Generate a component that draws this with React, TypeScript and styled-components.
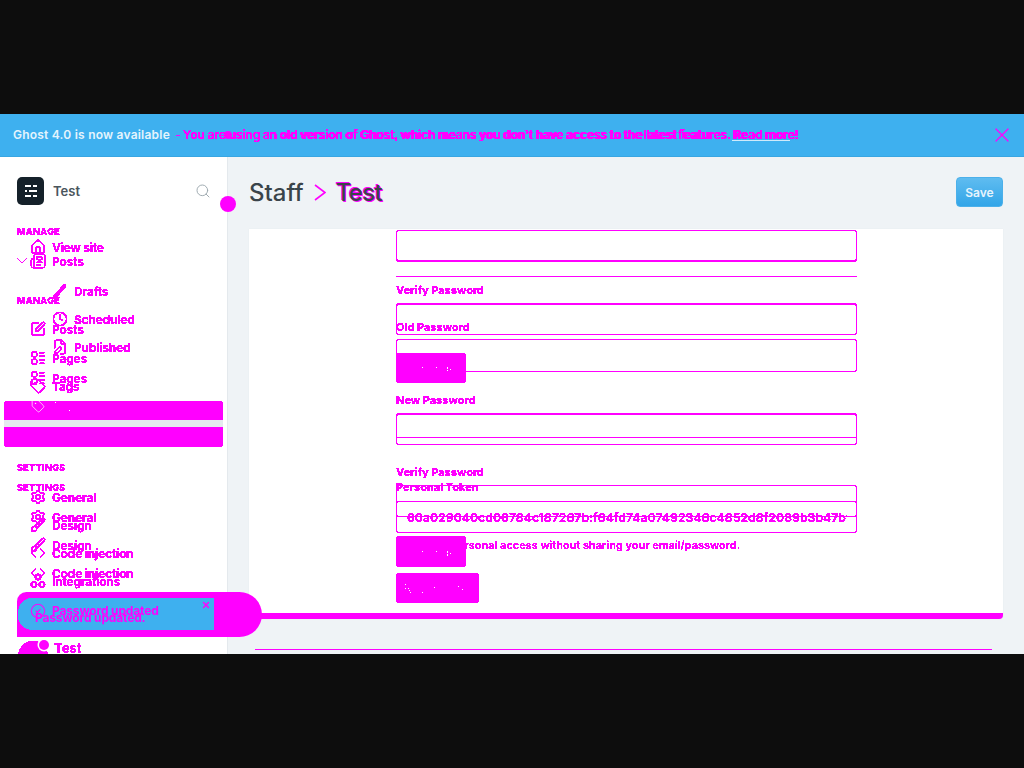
import React from "react";
import styled, { createGlobalStyle } from "styled-components";
import {
  Search, X, ChevronDown, ChevronUp, House, Newspaper, Brush, Clock, FilePen,
  SquarePen, LayoutList, Tag, Settings, Code, CircleCheck, LucideIcon,
} from "lucide-react";

const MAGENTA = "#ff00ff";

const GlobalStyle = createGlobalStyle`
  html, body {
    margin: 0;
    background: #0d0d0d;
    font-family: Inter, "Liberation Sans", sans-serif;
  }
`;

const FilterDefs = styled.svg`
  position: absolute;
  width: 0;
  height: 0;
`;

const Page = styled.div`
  height: 768px;
  padding-top: 114px;
  box-sizing: border-box;
  background: #0d0d0d;
`;

const Frame = styled.div`
  position: relative;
  height: 540px;
  display: flex;
  flex-direction: column;
  overflow: hidden;
  background: #eff3f6;
`;

const Marker = styled.span<{ $y: number; $r: number }>`
  position: absolute;
  z-index: 3;
  left: ${p => 228 - p.$r}px;
  top: ${p => p.$y - p.$r}px;
  width: ${p => p.$r * 2}px;
  height: ${p => p.$r * 2}px;
  border-radius: 50%;
  background: ${MAGENTA};
`;

/* banner */
const Banner = styled.div`
  flex: 0 0 43px;
  display: flex;
  align-items: center;
  padding: 0 10px 1px 13px;
  background: #3eb0ef;
  border-bottom: 1px solid #39a6e2;
  box-sizing: border-box;
  font-size: 12px;
`;

const Headline = styled.strong`
  color: #e4f4fd;
  font-weight: 600;
  letter-spacing: 0.22px;
  white-space: nowrap;
`;

const Announce = styled.div`
  position: relative;
  flex: 1;
  height: 16px;
  margin-left: 5px;
  filter: url(#crisp);
  color: ${MAGENTA};
  font-weight: 500;
  line-height: 16px;
  white-space: nowrap;
`;

const AnnounceLine = styled.span<{ $x: number; $spacing: number; $words: number }>`
  position: absolute;
  left: ${p => p.$x}px;
  top: 0;
  letter-spacing: ${p => p.$spacing}px;
  word-spacing: ${p => p.$words}px;
`;

const ReadMoreLine = styled.i`
  position: absolute;
  left: 557px;
  top: 13px;
  width: 58px;
  height: 1px;
  background: #cfeafa;
`;

const Body = styled.div`
  flex: 1;
  display: flex;
  min-height: 0;
`;

/* sidebar */
const Sidebar = styled.aside`
  position: relative;
  z-index: 2;
  flex: 0 0 228px;
  background: #fff;
  border-right: 1px solid #e4e9ed;
  box-sizing: border-box;
`;

const Brand = styled.div`
  height: 63px;
  box-sizing: border-box;
  display: flex;
  align-items: flex-start;
  padding: 20px 16px 0 17px;
  gap: 9px;
`;

const BrandName = styled.span`
  flex: 1;
  font-size: 13px;
  font-weight: 600;
  line-height: 28px;
  color: #4a555c;
`;

const SearchWrap = styled.span`
  display: flex;
  margin: 6px 0 0;
  color: #9aa6ac;
`;

const NavStack = styled.div`
  position: relative;
`;

const NavLayer = styled.nav<{ $over?: boolean }>`
  display: flow-root;
  filter: url(#crisp);
  ${p => p.$over && "position: absolute; inset: 0;"}
`;

const NavHead = styled.div<{ $gap: number }>`
  height: 14px;
  margin-top: ${p => p.$gap}px;
  padding-left: 17px;
  font-size: 9px;
  font-weight: 800;
  line-height: 14px;
  letter-spacing: 0.35px;
  color: ${MAGENTA};
`;

const NavRow = styled.a<{ $gap: number; $level: number }>`
  display: flex;
  align-items: center;
  gap: 6px;
  height: 14px;
  margin-top: ${p => p.$gap}px;
  padding-left: ${p => (p.$level ? 52 : 30)}px;
  font-size: 12px;
  font-weight: 700;
  letter-spacing: -0.22px;
  color: ${MAGENTA};
  white-space: nowrap;
`;

const Caret = styled.span`
  display: flex;
  width: 16px;
  margin: 0 -6px 0 -16px;
`;

const ActiveBlock = styled.div<{ $gap: number }>`
  display: flex;
  flex-direction: column;
  margin: ${p => p.$gap}px 4px 0 4px;
`;

const ActivePart = styled.div<{ $h: number; $top?: boolean }>`
  display: flex;
  align-items: flex-start;
  height: ${p => p.$h}px;
  background: ${MAGENTA};
  border-radius: ${p => (p.$top ? "3px 3px 0 0" : "0 0 3px 3px")};
  padding: 0 0 0 26px;
`;

const ActiveGap = styled.div`
  height: 7px;
  background: #e5eaef;
`;

const Speck = styled.span`
  filter: url(#speck);
  color: #fff;
  font-size: 12px;
  font-weight: 300;
  white-space: nowrap;
`;

const ActiveLabel = styled.span`
  display: flex;
  align-items: center;
  gap: 6px;
  height: 14px;
  margin-top: -2px;
  color: #fff;
`;

const UserRow = styled.div<{ $gap: number }>`
  position: relative;
  display: flex;
  gap: 6px;
  margin-top: ${p => p.$gap}px;
  padding: 0 17px 0 18px;
  color: ${MAGENTA};
  font-size: 13px;
  font-weight: 700;
  line-height: 14px;
`;

const Avatar = styled.span`
  position: relative;
  width: 30px;
  height: 30px;
  border-radius: 50%;
  background: ${MAGENTA};
`;

const AvatarBadge = styled.span`
  position: absolute;
  right: -1px;
  top: -1px;
  width: 10px;
  height: 10px;
  border-radius: 50%;
  background: ${MAGENTA};
  box-shadow: 0 0 0 1.5px #fff;
`;

const UserCaret = styled.span`
  display: flex;
  margin: 9px 0 0 auto;
`;

/* toast */
const Toast = styled.div`
  position: absolute;
  z-index: 4;
  left: 17px;
  top: 435px;
  width: 245px;
  height: 45px;
  box-sizing: border-box;
  padding: 6px 0 7px 1px;
  background: ${MAGENTA};
  border-radius: 10px 24px 24px 0;
`;

const ToastInner = styled.div`
  position: relative;
  display: flex;
  gap: 6px;
  width: 196px;
  height: 100%;
  box-sizing: border-box;
  padding: 5px 0 0 12px;
  background: #3eb0ef;
  border-radius: 15px 2px 2px 15px;
  color: ${MAGENTA};
  font-size: 12px;
  font-weight: 700;
  letter-spacing: -0.15px;
  filter: url(#crisp);
`;

const ToastText = styled.span`
  margin-top: 1px;
  line-height: 14px;
  white-space: nowrap;
`;

const ToastEcho = styled(ToastText)`
  position: absolute;
  left: 17px;
  top: 12px;
`;

const ToastClose = styled.span`
  position: absolute;
  right: 3px;
  top: 2px;
  display: flex;
`;

/* main */
const Main = styled.main`
  flex: 1;
  min-width: 0;
  padding: 0 21px;
  background: #eff3f6;
`;

const MainHeader = styled.header`
  height: 72px;
  display: flex;
  align-items: flex-start;
  justify-content: space-between;
  padding-top: 20px;
  box-sizing: border-box;
`;

const Title = styled.h1`
  display: flex;
  align-items: center;
  gap: 10px;
  margin: 0;
  height: 30px;
  font-size: 24px;
  font-weight: 500;
  color: #3a444a;
`;

const Crumb = styled.svg`
  width: 12px;
  height: 17px;
  fill: none;
  stroke: ${MAGENTA};
  stroke-width: 1.6;
`;

const Doubled = styled.span`
  letter-spacing: -0.7px;
  text-shadow: -1px -1px 0 ${MAGENTA}, 1px 1px 0 ${MAGENTA};
`;

const SaveButton = styled.button`
  width: 47px;
  height: 30px;
  border: 1px solid #4bb0ea;
  border-radius: 4px;
  background: linear-gradient(#5fbcf0, #32a5e8);
  color: #e6f4fd;
  font: 600 12px Inter, sans-serif;
`;

const Card = styled.section`
  position: relative;
  height: 390px;
  box-sizing: border-box;
  background: #fff;
  border-bottom: 6px solid ${MAGENTA};
  border-radius: 0 0 4px 4px;
  box-shadow: 0 0 1px #d7dee3;
`;

const Form = styled.div`
  position: relative;
  display: flow-root;
  width: 461px;
  margin-left: 147px;
`;

const FormLayer = styled.div<{ $over?: boolean }>`
  display: flow-root;
  filter: url(#crisp);
  ${p => p.$over && "position: absolute; inset: 0;"}
`;

const Box = styled.div<{ $gap: number; $h: number; $tw?: number; $bw?: number }>`
  height: ${p => p.$h}px;
  box-sizing: border-box;
  margin-top: ${p => p.$gap}px;
  border: 1px solid ${MAGENTA};
  border-top-width: ${p => p.$tw ?? 1}px;
  border-bottom-width: ${p => p.$bw ?? 1}px;
  border-radius: 3px;
`;

const Rule = styled.hr<{ $gap: number }>`
  height: 1px;
  margin: ${p => p.$gap}px 0 0;
  border: 0;
  background: ${MAGENTA};
`;

const Label = styled.label<{ $gap: number }>`
  display: block;
  height: 14px;
  margin-top: ${p => p.$gap}px;
  font-size: 11px;
  font-weight: 700;
  line-height: 14px;
  color: ${MAGENTA};
`;

const TokenBox = styled(Box)`
  display: flex;
  align-items: center;
  padding: 0 9px 0 10px;
  font-size: 12.3px;
  font-weight: 600;
  color: ${MAGENTA};
`;

const TokenText = styled.span`
  flex: 1;
  overflow: hidden;
  white-space: nowrap;
`;

const Help = styled.p<{ $gap: number }>`
  height: 14px;
  margin: ${p => p.$gap}px 0 0;
  font-size: 11px;
  font-weight: 600;
  letter-spacing: -0.03px;
  line-height: 14px;
  color: ${MAGENTA};
`;

const FormButton = styled.button<{ $gap: number; $w: number; $h: number; $pad: number }>`
  display: block;
  width: ${p => p.$w}px;
  height: ${p => p.$h}px;
  margin-top: ${p => p.$gap}px;
  padding: 0 ${p => p.$pad}px 0 0;
  border: 0;
  border-radius: 3px;
  background: ${MAGENTA};
  text-align: right;
  font-family: Inter, sans-serif;
`;

const Divider = styled.div`
  height: 1px;
  margin: 30px 11px 0 6px;
  background: ${MAGENTA};
`;

const IconSlot = styled.span`
  display: flex;
  flex: 0 0 16px;
  justify-content: center;
`;

function IntegrationsIcon() {
  return (
    <svg width="16" height="16" viewBox="0 0 16 16" fill="none" stroke="currentColor" strokeWidth="1.6">
      <circle cx="8" cy="4" r="2.6" />
      <circle cx="4" cy="11.5" r="2.6" />
      <circle cx="12" cy="11.5" r="2.6" />
    </svg>
  );
}

function DraftIcon() {
  return (
    <svg width="16" height="16" viewBox="0 0 16 16" fill="none" stroke="currentColor" strokeWidth="3.6" strokeLinecap="round">
      <path d="M3 13.5 12.5 3" />
    </svg>
  );
}

type NavItem = {
  label: string;
  y: number;
  head?: boolean;
  level?: number;
  caret?: boolean;
  Icon?: LucideIcon | typeof IntegrationsIcon;
};

const expanded: NavItem[] = [
  { label: "MANAGE", y: 232, head: true },
  { label: "View site", y: 247, Icon: House },
  { label: "Posts", y: 261, Icon: Newspaper, caret: true },
  { label: "Drafts", y: 291, Icon: DraftIcon, level: 1 },
  { label: "Scheduled", y: 319, Icon: Clock, level: 1 },
  { label: "Published", y: 347, Icon: FilePen, level: 1 },
  { label: "Pages", y: 378, Icon: LayoutList },
  { label: "SETTINGS", y: 488, head: true },
  { label: "General", y: 517, Icon: Settings },
  { label: "Design", y: 545, Icon: Brush },
  { label: "Code injection", y: 573, Icon: Code },
  { label: "Integrations", y: 601, Icon: IntegrationsIcon },
];

const collapsedTop: NavItem[] = [
  { label: "MANAGE", y: 301, head: true },
  { label: "Posts", y: 329, Icon: SquarePen },
  { label: "Pages", y: 358, Icon: LayoutList },
  { label: "Tags", y: 386, Icon: Tag },
];

const collapsedBottom: NavItem[] = [
  { label: "SETTINGS", y: 468, head: true },
  { label: "General", y: 497, Icon: Settings },
  { label: "Design", y: 525, Icon: Brush },
  { label: "Code injection", y: 553, Icon: Code },
  { label: "Integrations", y: 581, Icon: IntegrationsIcon },
];

// rows are 14px tall, the gap is what is left between two row centres
function renderRows(items: NavItem[], startY: number) {
  let bottom = startY;
  return items.map(item => {
    const gap = item.y - 7 - bottom;
    bottom = item.y + 7;
    if (item.head) {
      return <NavHead key={item.label} $gap={gap}>{item.label}</NavHead>;
    }
    const Icon = item.Icon;
    return (
      <NavRow key={item.label} $gap={gap} $level={item.level ?? 0}>
        {item.caret && (
          <Caret><ChevronDown size={16} strokeWidth={1.4} /></Caret>
        )}
        <IconSlot>{Icon && <Icon size={16} strokeWidth={2} />}</IconSlot>
        {item.label}
      </NavRow>
    );
  });
}

const BANNER_TEXT = "You are using an old version of Ghost, which means you don't have access to the latest features. Read more!";

export default function App() {
  return (
    <Page>
      <GlobalStyle />
      <FilterDefs aria-hidden="true">
        <filter id="crisp" colorInterpolationFilters="sRGB">
          <feComponentTransfer><feFuncA type="discrete" tableValues="0 1 1 1" /></feComponentTransfer>
        </filter>
        <filter id="speck" colorInterpolationFilters="sRGB">
          <feComponentTransfer><feFuncA type="discrete" tableValues="0 0 0 0 0 0 0 1" /></feComponentTransfer>
        </filter>
      </FilterDefs>
      <Frame>
        <Marker $y={21} $r={4} />
        <Marker $y={90} $r={8} />
        <Banner>
          <Headline>Ghost 4.0 is now available</Headline>
          <Announce>
            <AnnounceLine $x={0} $spacing={0} $words={0}>-</AnnounceLine>
            <AnnounceLine $x={8} $spacing={-0.05} $words={0}>{BANNER_TEXT}</AnnounceLine>
            <AnnounceLine $x={8} $spacing={0.16} $words={-1.2}>{BANNER_TEXT}</AnnounceLine>
            <ReadMoreLine />
          </Announce>
          <X size={24} color={MAGENTA} strokeWidth={1.2} />
        </Banner>
        <Body>
          <Sidebar>
            <Brand>
              <svg width="27" height="28" viewBox="0 0 27 28">
                <rect width="27" height="28" rx="5" fill="#15212a" />
                <g stroke="#fff" strokeWidth="2">
                  <path d="M8 9h6M16 9h4M8 14h2M12 14h8M8 19h6M16 19h4" />
                </g>
              </svg>
              <BrandName>Test</BrandName>
              <SearchWrap><Search size={16} strokeWidth={1.4} /></SearchWrap>
            </Brand>
            <NavStack>
              <NavLayer>
                {renderRows(collapsedTop, 220)}
                <ActiveBlock $gap={8}>
                  <ActivePart $h={19} $top>
                    <ActiveLabel>
                      <IconSlot><Tag size={14} strokeWidth={1.2} /></IconSlot>
                      <Speck>Tags</Speck>
                    </ActiveLabel>
                  </ActivePart>
                  <ActiveGap />
                  <ActivePart $h={20} />
                </ActiveBlock>
                {renderRows(collapsedBottom, 447)}
              </NavLayer>
              <NavLayer $over>
                {renderRows(expanded, 220)}
                <UserRow $gap={33}>
                  <Avatar><AvatarBadge /></Avatar>
                  Test
                  <UserCaret><ChevronUp size={12} strokeWidth={1.6} /></UserCaret>
                </UserRow>
              </NavLayer>
            </NavStack>
            <Toast>
              <ToastInner>
                <CircleCheck size={16} strokeWidth={1.6} />
                <ToastText>Password updated</ToastText>
                <ToastEcho>Password updated.</ToastEcho>
                <ToastClose><X size={10} strokeWidth={3.5} /></ToastClose>
              </ToastInner>
            </Toast>
          </Sidebar>
          <Main>
            <MainHeader>
              <Title>
                Staff
                <Crumb viewBox="0 0 12 17"><path d="M1 1l10 7.5L1 16" /></Crumb>
                <Doubled>Test</Doubled>
              </Title>
              <SaveButton>Save</SaveButton>
            </MainHeader>
            <Card>
              <Form>
                <FormLayer>
                  <Rule $gap={208} />
                  <Label $gap={42}>Personal Token</Label>
                  <TokenBox $gap={7} $h={32}>
                    <TokenText>60a029040cd06784c187267b:f64fd74a07492346c4852d8f2089b3b47bf0a1c2</TokenText>
                  </TokenBox>
                  <Help $gap={5}>Give apps personal access without sharing your email/password.</Help>
                  <FormButton $gap={21} $w={83} $h={30} $pad={11}><Speck>Regenerate</Speck></FormButton>
                </FormLayer>
                <FormLayer $over>
                  <Box $gap={1} $h={32} $bw={2} />
                  <Rule $gap={14} />
                  <Label $gap={6}>Verify Password</Label>
                  <Box $gap={6} $h={32} $tw={2} />
                  <FormButton $gap={18} $w={70} $h={30} $pad={10}><Speck>Change</Speck></FormButton>
                </FormLayer>
                <FormLayer $over>
                  <Label $gap={91}>Old Password</Label>
                  <Box $gap={5} $h={33} />
                  <Label $gap={21}>New Password</Label>
                  <Box $gap={6} $h={32} $tw={2} />
                  <Label $gap={20}>Verify Password</Label>
                  <Box $gap={6} $h={32} />
                  <FormButton $gap={19} $w={70} $h={31} $pad={10}><Speck>Change</Speck></FormButton>
                </FormLayer>
              </Form>
            </Card>
            <Divider />
          </Main>
        </Body>
      </Frame>
    </Page>
  );
}
